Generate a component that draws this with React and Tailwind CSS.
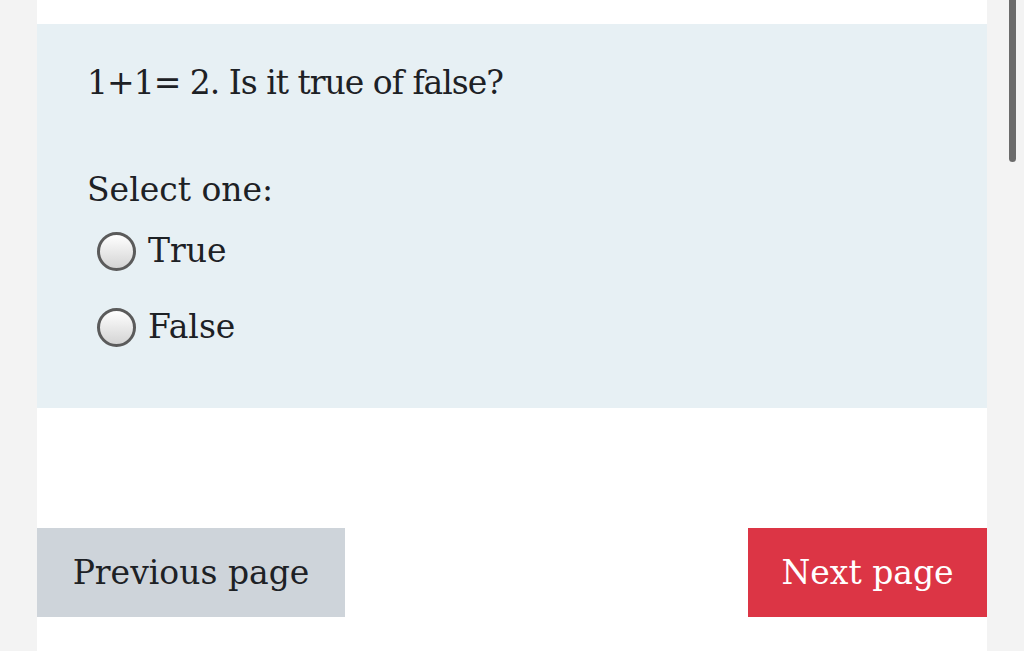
import React from 'react';

const serif = { fontFamily: '"DejaVu Serif", "Liberation Serif", serif' };

function Radio({ label }) {
    return (
        <label className="flex items-center h-[76px]">
            <span className="ml-[10px] w-[39px] h-[39px] rounded-full border-[3px] border-[#5b5b5b] bg-gradient-to-b from-white to-[#d4d4d4] shrink-0"></span>
            <span className="ml-[12px] text-[33px] text-[#1d2125]">{label}</span>
        </label>
    );
}

export default function App() {
    return (
        <div className="w-[1024px] h-[651px] overflow-hidden bg-[#f3f3f3] flex" style={serif}>
            <div className="w-[37px] shrink-0"></div>

            <div className="w-[950px] shrink-0 bg-white flex flex-col">
                <div className="h-[24px]"></div>

                {/* Question box */}
                <div className="h-[384px] bg-[#e7f0f4] pl-[50px] pt-[34px]">
                    <p className="text-[33px] leading-[50px] tracking-[-1px] text-[#1d2125]">1+1= 2. Is it true of false?</p>
                    <p className="mt-[57px] text-[33px] leading-[50px] text-[#1d2125]">Select one:</p>
                    <div className="flex flex-col -mt-[2px]">
                        <Radio label="True" />
                        <Radio label="False" />
                    </div>
                </div>

                <div className="h-[120px]"></div>

                <div className="flex justify-between">
                    <button className="w-[308px] h-[89px] bg-[#ced4da] text-[#1d2125] text-[33px]">Previous page</button>
                    <button className="w-[239px] h-[89px] bg-[#dc3545] text-white text-[33px]">Next page</button>
                </div>
            </div>

            <div className="flex-1 pl-[22px]">
                <div className="w-[7px] h-[162px] bg-[#6b6b6b] rounded-b-full"></div>
            </div>
        </div>
    );
}
